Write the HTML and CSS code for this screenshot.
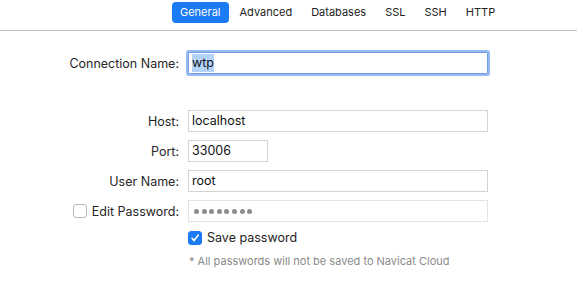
FILE: index.html
```html
<!DOCTYPE html>
<html lang="en">
<head>
    <meta charset="UTF-8">
    <title>New Connection - General</title>
    <link rel="stylesheet" href="styles.css">
</head>
<body>

<!-- Tab bar -->
<div class="tabbar">
    <div class="tabs">
        <span class="tab active">General</span>
        <span class="tab">Advanced</span>
        <span class="tab">Databases</span>
        <span class="tab">SSL</span>
        <span class="tab">SSH</span>
        <span class="tab">HTTP</span>
    </div>
</div>

<!-- Connection form -->
<div class="form">
    <div class="row name-row">
        <label class="label">Connection Name:</label>
        <div class="field focused"><span class="selected">wtp</span></div>
    </div>

    <div class="row">
        <label class="label">Host:</label>
        <div class="field">localhost</div>
    </div>

    <div class="row">
        <label class="label">Port:</label>
        <div class="field short">33006</div>
    </div>

    <div class="row">
        <label class="label">User Name:</label>
        <div class="field">root</div>
    </div>

    <div class="row">
        <label class="label"><span class="check"></span>Edit Password:</label>
        <div class="field disabled">
            <span class="dots">
                <i></i><i></i><i></i><i></i><i></i><i></i><i></i><i></i>
            </span>
        </div>
    </div>

    <div class="row option-row">
        <span></span>
        <label class="option">
            <span class="check checked">
                <svg width="10" height="10" viewBox="0 0 10 10"><path d="M2 5.3 L4.1 7.6 L8.2 2.2" fill="none" stroke="#fff" stroke-width="1.6" stroke-linecap="round" stroke-linejoin="round"/></svg>
            </span>Save password
        </label>
    </div>

    <div class="row note-row">
        <span></span>
        <p class="note">* All passwords will not be saved to Navicat Cloud</p>
    </div>
</div>

</body>
</html>
```

FILE: styles.css
```css
body {
    margin: 0;
    font-family: 'Inter', 'Liberation Sans', sans-serif;
    font-size: 12.5px;
    color: #222;
    background: #fff;
}

/* Tabs */
.tabbar {
    height: 30px;
    border-bottom: 1px solid #c2c2c2;
}

.tabs {
    display: flex;
    gap: 3px;
    padding: 2px 0 0 172px;
}

.tab {
    height: 21px;
    line-height: 21px;
    padding: 0 8px;
    font-size: 11px;
    color: #222;
    border-radius: 4px;
}

.tab.active {
    background: #1b7bf4;
    color: #fff;
}

/* Form rows */
.form {
    padding-top: 21px;
}

.row {
    display: grid;
    grid-template-columns: 180px 300px;
    column-gap: 8px;
    align-items: center;
    margin-bottom: 8px;
}

.name-row {
    margin-bottom: 36px;
}

.label {
    display: flex;
    justify-content: flex-end;
    align-items: center;
    gap: 5px;
    padding-right: 1px;
    color: #262626;
    white-space: nowrap;
}

.field {
    box-sizing: border-box;
    height: 22px;
    line-height: 20px;
    padding: 0 3px;
    border: 1px solid #d4d4d4;
    color: #111;
    white-space: nowrap;
}

.field.short {
    width: 80px;
}

.field.focused {
    border-color: #6f9ee6;
    box-shadow: 0 0 0 2px #97bbf0;
    border-radius: 1px;
}

.selected {
    background: #b3d3fb;
    padding: 1px 0 2px;
}

.field.disabled {
    border-color: #e2e2e2;
}

.dots {
    display: flex;
    gap: 2.6px;
    height: 20px;
    align-items: center;
    padding-left: 2px;
}

.dots i {
    width: 5px;
    height: 5px;
    border-radius: 50%;
    background: #8c8c8c;
}

/* Checkboxes */
.check {
    box-sizing: border-box;
    flex: none;
    width: 14px;
    height: 14px;
    border: 1px solid #b5b5b5;
    border-radius: 3px;
    background: #fff;
    display: inline-flex;
    align-items: center;
    justify-content: center;
}

.check.checked {
    background: #1b7bf4;
    border-color: #1b7bf4;
}

.option-row {
    margin-bottom: 0;
}

.option {
    display: flex;
    align-items: center;
    gap: 5px;
    color: #222;
}

.note {
    margin: 9px 0 0;
    font-size: 11px;
    color: #8a8a8a;
    padding-left: 1px;
}
```
